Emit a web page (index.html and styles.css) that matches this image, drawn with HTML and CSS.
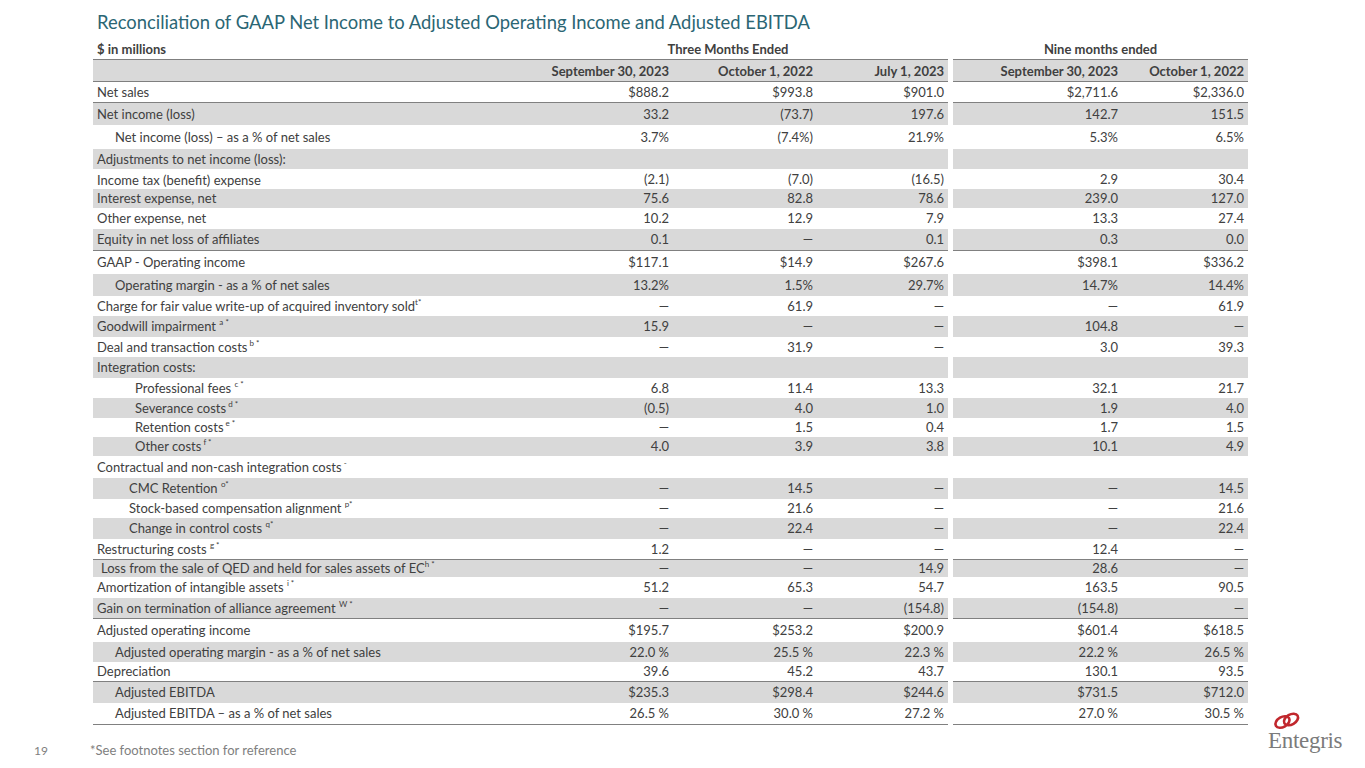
FILE: index.html
```html
<!DOCTYPE html>
<html lang="en">
<head>
<meta charset="utf-8">
<title>Reconciliation of GAAP Net Income</title>
<link rel="stylesheet" href="styles.css">
</head>
<body>
<div class="slide">
  <h1 class="title">Reconciliation of GAAP Net Income to Adjusted Operating Income and Adjusted EBITDA</h1>
  <table class="recon">
    <colgroup>
      <col class="c-label"><col class="c-n1"><col class="c-n2"><col class="c-n3"><col class="c-gap"><col class="c-n4"><col class="c-n5">
    </colgroup>
    <thead>
      <tr class="group">
        <th class="lbl">$ in millions</th>
        <th colspan="3" class="grp three">Three Months Ended</th>
        <th class="gap"></th>
        <th colspan="2" class="grp">Nine months ended</th>
      </tr>
      <tr class="dates">
        <th class="lbl"></th>
        <th>September 30, 2023</th>
        <th>October 1, 2022</th>
        <th>July 1, 2023</th>
        <th class="gap"></th>
        <th>September 30, 2023</th>
        <th>October 1, 2022</th>
      </tr>
    </thead>
    <tbody>
      <tr class="h21 line"><td class="lbl">Net sales</td><td>$888.2</td><td>$993.8</td><td>$901.0</td><td class="gap"></td><td>$2,711.6</td><td>$2,336.0</td></tr>
      <tr class="g h22"><td class="lbl">Net income (loss)</td><td>33.2</td><td>(73.7)</td><td>197.6</td><td class="gap"></td><td>142.7</td><td>151.5</td></tr>
      <tr class="h24"><td class="lbl i1">Net income (loss) – as a % of net sales</td><td>3.7%</td><td>(7.4%)</td><td>21.9%</td><td class="gap"></td><td>5.3%</td><td>6.5%</td></tr>
      <tr class="g h20"><td class="lbl">Adjustments to net income (loss):</td><td></td><td></td><td></td><td class="gap"></td><td></td><td></td></tr>
      <tr class="h20"><td class="lbl low">Income tax (benefit) expense</td><td>(2.1)</td><td>(7.0)</td><td>(16.5)</td><td class="gap"></td><td>2.9</td><td>30.4</td></tr>
      <tr class="g h19"><td class="lbl">Interest expense, net</td><td>75.6</td><td>82.8</td><td>78.6</td><td class="gap"></td><td>239.0</td><td>127.0</td></tr>
      <tr class="h21"><td class="lbl">Other expense, net</td><td>10.2</td><td>12.9</td><td>7.9</td><td class="gap"></td><td>13.3</td><td>27.4</td></tr>
      <tr class="g h22 line"><td class="lbl">Equity in net loss of affiliates</td><td>0.1</td><td>—</td><td>0.1</td><td class="gap"></td><td>0.3</td><td>0.0</td></tr>
      <tr class="h23"><td class="lbl">GAAP - Operating income</td><td>$117.1</td><td>$14.9</td><td>$267.6</td><td class="gap"></td><td>$398.1</td><td>$336.2</td></tr>
      <tr class="g h22"><td class="lbl i1">Operating margin - as a % of net sales</td><td>13.2%</td><td>1.5%</td><td>29.7%</td><td class="gap"></td><td>14.7%</td><td>14.4%</td></tr>
      <tr class="h20"><td class="lbl">Charge for fair value write-up of acquired inventory sold<sup>t*</sup></td><td>—</td><td>61.9</td><td>—</td><td class="gap"></td><td>—</td><td>61.9</td></tr>
      <tr class="g h21"><td class="lbl">Goodwill impairment <sup>a *</sup></td><td>15.9</td><td>—</td><td>—</td><td class="gap"></td><td>104.8</td><td>—</td></tr>
      <tr class="h20"><td class="lbl">Deal and transaction costs<sup> b *</sup></td><td>—</td><td>31.9</td><td>—</td><td class="gap"></td><td>3.0</td><td>39.3</td></tr>
      <tr class="g h21"><td class="lbl">Integration costs:</td><td></td><td></td><td></td><td class="gap"></td><td></td><td></td></tr>
      <tr class="h20"><td class="lbl i3">Professional fees <sup>c *</sup></td><td>6.8</td><td>11.4</td><td>13.3</td><td class="gap"></td><td>32.1</td><td>21.7</td></tr>
      <tr class="g h20"><td class="lbl i3">Severance costs<sup> d *</sup></td><td>(0.5)</td><td>4.0</td><td>1.0</td><td class="gap"></td><td>1.9</td><td>4.0</td></tr>
      <tr class="h19"><td class="lbl i3">Retention costs<sup> e *</sup></td><td>—</td><td>1.5</td><td>0.4</td><td class="gap"></td><td>1.7</td><td>1.5</td></tr>
      <tr class="g h19"><td class="lbl i3">Other costs<sup> f *</sup></td><td>4.0</td><td>3.9</td><td>3.8</td><td class="gap"></td><td>10.1</td><td>4.9</td></tr>
      <tr class="h22"><td class="lbl">Contractual and non-cash integration costs<sup> -</sup></td><td></td><td></td><td></td><td class="gap"></td><td></td><td></td></tr>
      <tr class="g h21"><td class="lbl i2">CMC Retention <sup>o*</sup></td><td>—</td><td>14.5</td><td>—</td><td class="gap"></td><td>—</td><td>14.5</td></tr>
      <tr class="h19"><td class="lbl i2">Stock-based compensation alignment <sup>p*</sup></td><td>—</td><td>21.6</td><td>—</td><td class="gap"></td><td>—</td><td>21.6</td></tr>
      <tr class="g h21"><td class="lbl i2">Change in control costs <sup>q*</sup></td><td>—</td><td>22.4</td><td>—</td><td class="gap"></td><td>—</td><td>22.4</td></tr>
      <tr class="h21 line"><td class="lbl">Restructuring costs <sup>g *</sup></td><td>1.2</td><td>—</td><td>—</td><td class="gap"></td><td>12.4</td><td>—</td></tr>
      <tr class="g h17"><td class="lbl i0">Loss from the sale of QED and held for sales assets of EC<sup>h *</sup></td><td>—</td><td>—</td><td>14.9</td><td class="gap"></td><td>28.6</td><td>—</td></tr>
      <tr class="h21"><td class="lbl">Amortization of intangible assets <sup>i *</sup></td><td>51.2</td><td>65.3</td><td>54.7</td><td class="gap"></td><td>163.5</td><td>90.5</td></tr>
      <tr class="g h21 line"><td class="lbl">Gain on termination of alliance agreement <sup>W *</sup></td><td>—</td><td>—</td><td>(154.8)</td><td class="gap"></td><td>(154.8)</td><td>—</td></tr>
      <tr class="h23"><td class="lbl">Adjusted operating income</td><td>$195.7</td><td>$253.2</td><td>$200.9</td><td class="gap"></td><td>$601.4</td><td>$618.5</td></tr>
      <tr class="g h20"><td class="lbl i1">Adjusted operating margin - as a % of net sales</td><td>22.0 %</td><td>25.5 %</td><td>22.3 %</td><td class="gap"></td><td>22.2 %</td><td>26.5 %</td></tr>
      <tr class="h20 line"><td class="lbl">Depreciation</td><td>39.6</td><td>45.2</td><td>43.7</td><td class="gap"></td><td>130.1</td><td>93.5</td></tr>
      <tr class="g h21"><td class="lbl i1">Adjusted EBITDA</td><td>$235.3</td><td>$298.4</td><td>$244.6</td><td class="gap"></td><td>$731.5</td><td>$712.0</td></tr>
      <tr class="h22 line"><td class="lbl i1">Adjusted EBITDA – as a % of net sales</td><td>26.5 %</td><td>30.0 %</td><td>27.2 %</td><td class="gap"></td><td>27.0 %</td><td>30.5 %</td></tr>
    </tbody>
  </table>
  <div class="footer">
    <span class="pagenum">19</span>
    <span class="footnote">*See footnotes section for reference</span>
    <div class="logo">
      <svg class="rings" width="28" height="19" viewBox="0 0 28 19" aria-hidden="true">
        <ellipse cx="9.5" cy="11" rx="7.6" ry="5" transform="rotate(-30 9.5 11)" fill="none" stroke="#c1272d" stroke-width="2.6"/>
        <ellipse cx="18" cy="8.5" rx="7.6" ry="5" transform="rotate(-30 18 8.5)" fill="none" stroke="#c1272d" stroke-width="2.6"/>
      </svg>
      <span class="wordmark">Entegris</span>
    </div>
  </div>
</div>
</body>
</html>
```

FILE: styles.css
```css
html, body {
  margin: 0;
  padding: 0;
  background: #ffffff;
}

.slide {
  width: 1365px;
  height: 768px;
  box-sizing: border-box;
  padding: 10px 0 0 93px;
  display: flex;
  flex-direction: column;
  font-family: "Lato", "Liberation Sans", sans-serif;
  color: #404040;
  overflow: hidden;
}

.title {
  margin: 0 0 0 4px;
  font-weight: 400;
  font-size: 18.4px;
  line-height: 24px;
  color: #2b6674;
  white-space: nowrap;
}

.recon {
  margin-top: 5px;
  width: 1155px;
  border-collapse: collapse;
  table-layout: fixed;
  font-size: 13px;
}

.c-label { width: 437px; }
.c-n1 { width: 143px; }
.c-n2 { width: 144px; }
.c-n3 { width: 131px; }
.c-gap { width: 5px; }
.c-n4 { width: 169px; }
.c-n5 { width: 126px; }

.recon th,
.recon td {
  padding: 0 4px 0 4px;
  text-align: right;
  white-space: nowrap;
  vertical-align: middle;
  line-height: 16px;
}

.recon .lbl {
  text-align: left;
}

.recon th {
  font-weight: 700;
  color: #404040;
}

.group th {
  height: 20px;
  vertical-align: middle;
  text-align: center;
}

.group th.lbl {
  text-align: left;
}

.group th.three {
  padding-right: 26px;
}

.dates th {
  height: 21px;
  background: #d9d9d9;
  border-top: 1.5px solid #7f7f7f;
  border-bottom: 1.5px solid #7f7f7f;
}

.recon tbody tr { height: 20px; }
.recon tbody tr.h17 { height: 17px; }
.recon tbody tr.h19 { height: 19px; }
.recon tbody tr.h20 { height: 20px; }
.recon tbody tr.h21 { height: 21px; }
.recon tbody tr.h22 { height: 22px; }
.recon tbody tr.h23 { height: 23px; }
.recon tbody tr.h24 { height: 24px; }

.recon tbody tr.g td {
  background: #d9d9d9;
}

.recon tbody tr.line td {
  border-bottom: 1px solid #808080;
}

.recon .gap,
.recon tbody tr.g td.gap,
.recon tbody tr.line td.gap,
.dates th.gap {
  background: #ffffff;
  border: none;
  padding: 0;
}

.recon td.low {
  padding-top: 3px;
}

.i0 { padding-left: 8px !important; }
.i1 { padding-left: 22px !important; }
.i2 { padding-left: 36px !important; }
.i3 { padding-left: 42px !important; }

.recon sup {
  font-size: 8px;
  line-height: 0;
  vertical-align: 6px;
}

.footer {
  flex: 1;
  display: flex;
  align-items: flex-end;
  margin-top: -20px;
  margin-left: -93px;
}

.pagenum {
  width: 34px;
  margin-left: 34px;
  margin-right: 22px;
  padding-bottom: 10px;
  font-size: 12px;
  color: #808080;
}

.footnote {
  padding-bottom: 10px;
  font-size: 13px;
  color: #808080;
}

.logo {
  margin-left: auto;
  margin-right: 19px;
  width: 78px;
  display: flex;
  flex-direction: column;
  align-items: flex-start;
  padding-bottom: 16px;
}

.rings {
  display: block;
  margin-left: 5px;
}

.wordmark {
  font-family: "Liberation Serif", "DejaVu Serif", serif;
  font-size: 23px;
  line-height: 22px;
  color: #7b7b7b;
  letter-spacing: -0.3px;
  white-space: nowrap;
}
```
